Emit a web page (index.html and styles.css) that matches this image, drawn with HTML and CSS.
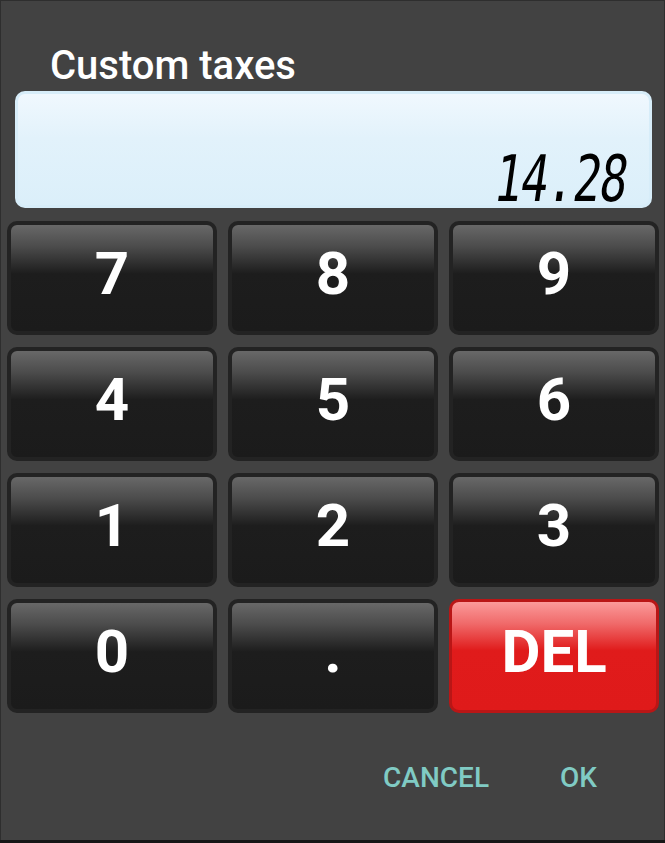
FILE: index.html
```html
<!DOCTYPE html>
<html lang="en">
<head>
  <meta charset="UTF-8">
  <meta name="viewport" content="width=device-width, initial-scale=1.0">
  <title>Custom taxes</title>
  <link rel="stylesheet" href="styles.css">
</head>
<body>
  <div class="dialog">
    <h1 class="title">Custom taxes</h1>
    <div class="display">
      <span class="lcd">14.28</span>
    </div>
    <div class="keypad">
      <button class="key">7</button>
      <button class="key">8</button>
      <button class="key">9</button>
      <button class="key">4</button>
      <button class="key">5</button>
      <button class="key">6</button>
      <button class="key">1</button>
      <button class="key">2</button>
      <button class="key">3</button>
      <button class="key">0</button>
      <button class="key">.</button>
      <button class="key del">DEL</button>
    </div>
    <div class="actions">
      <a href="javascript:" class="action">CANCEL</a>
      <a href="javascript:" class="action">OK</a>
    </div>
  </div>
</body>
</html>
```

FILE: styles.css
```css
* {
  margin: 0;
  padding: 0;
  box-sizing: border-box;
}

body {
  background: #161616;
  font-family: Roboto, "Liberation Sans", sans-serif;
}

.dialog {
  width: 665px;
  height: 840px;
  background: #424242;
  border-left: 1px solid #2e2e2e;
  border-top: 1px solid #2e2e2e;
  border-right: 1px solid #2e2e2e;
}

.title {
  padding: 41px 0 0 49px;
  font-size: 40px;
  line-height: 48px;
  font-weight: 500;
  color: #fff;
}

.display {
  height: 117px;
  margin: 1px 12px 0 14px;
  padding: 54px 22px 0 0;
  text-align: right;
  border: 3px solid #d7edf9;
  border-radius: 10px;
  background: linear-gradient(#f0f8fe, #e2f2fb 40%, #dbeffa);
}

/* segment-style readout: narrow, slanted digits */
.lcd {
  display: inline-block;
  font-family: "DejaVu Sans Mono", monospace;
  font-size: 64px;
  line-height: 62px;
  font-weight: 400;
  letter-spacing: -2px;
  color: #000;
  transform: skewX(-8deg) scaleX(0.72);
  transform-origin: right center;
}

.keypad {
  display: grid;
  grid-template-columns: repeat(3, 210px);
  grid-auto-rows: 114px;
  column-gap: 11px;
  row-gap: 12px;
  margin: 13px 0 0 6px;
}

.key {
  display: flex;
  align-items: center;
  justify-content: center;
  padding-bottom: 9px;
  border: 4px solid #232323;
  border-radius: 10px;
  background: linear-gradient(#686868, #4c4c4c 20%, #1d1d1d 46%, #1b1b1b);
  font-family: Roboto, "Liberation Sans", sans-serif;
  font-size: 60px;
  line-height: 60px;
  font-weight: 700;
  color: #fff;
}

.del {
  border: 3px solid #b91616;
  background: linear-gradient(#fb9a9a, #f06a6a 20%, #e01b1b 45%, #df1a1a);
}

.actions {
  display: flex;
  justify-content: flex-end;
  gap: 71px;
  margin-top: 49px;
  padding-right: 67px;
}

.action {
  font-size: 28px;
  line-height: 32px;
  font-weight: 500;
  color: #80cbc4;
  text-decoration: none;
}
```
